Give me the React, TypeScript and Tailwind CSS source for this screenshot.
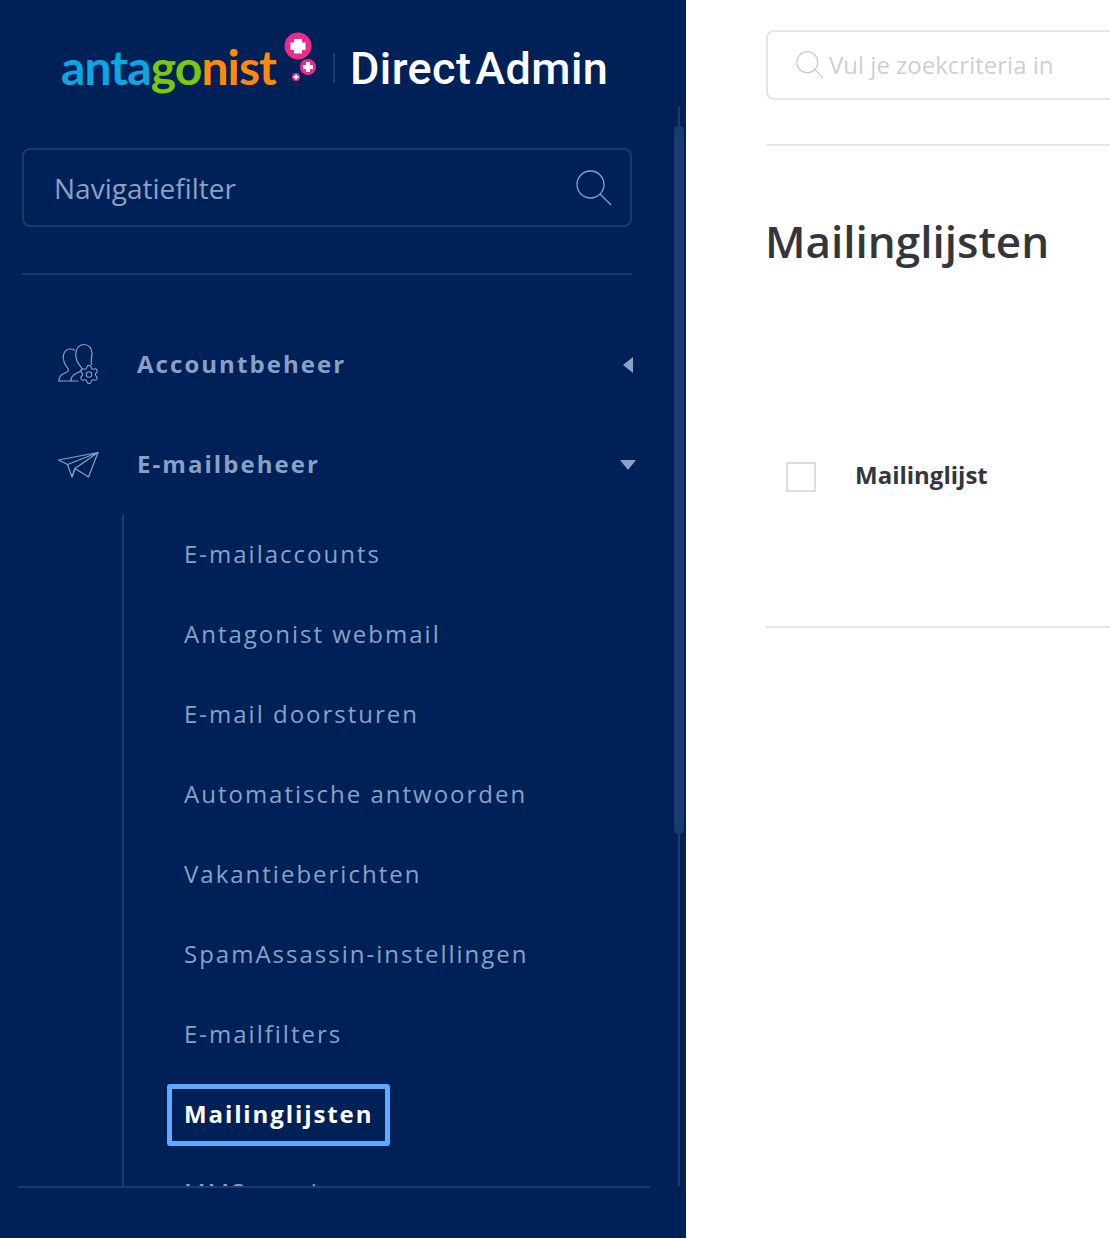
import { Settings } from 'lucide-react';

const subItems = [
  'E-mailaccounts',
  'Antagonist webmail',
  'E-mail doorsturen',
  'Automatische antwoorden',
  'Vakantieberichten',
  'SpamAssassin-instellingen',
  'E-mailfilters',
];

function SearchIcon({ className, stroke }: { className: string; stroke: string }) {
  return (
    <svg viewBox="0 0 36 36" fill="none" stroke={stroke} strokeWidth="1.3" className={className}>
      <circle cx="14.5" cy="14.5" r="13.5" />
      <path d="M24 24l11 11" />
    </svg>
  );
}

function Logo() {
  return (
    <div className="flex h-[106px] items-start pl-[60px]">
      <div className="mt-[32px] flex items-start">
        <div className="mt-[10px] flex h-[50px] w-[220px] items-center pl-[1px] font-['Lato',sans-serif] text-[48px] leading-none font-bold tracking-[-0.9px]">
          <span className="text-[#0ea5e0]">anta</span>
          <span className="text-[#7ac70c]">go</span>
          <span className="text-[#ff8a0d]">nist</span>
        </div>
        <svg viewBox="0 0 40 60" className="h-[60px] w-[40px]">
          <circle cx="18" cy="14" r="13.5" fill="#ec2b8c" />
          <path d="M14 7h8v3.500h3.500v7.500H22v3.500h-8V18h-3.500v-7.500H14z" fill="#fff" />
          <circle cx="28" cy="35" r="8" fill="#ec2b8c" />
          <path d="M26 30h4v3h3v4h-3v3h-4v-3h-3v-4h3z" fill="#fff" />
          <circle cx="16" cy="45" r="4" fill="#ec2b8c" />
          <path d="M15 42.500h2v1.500h1.500v2H17v1.500h-2V46h-1.500v-2H15z" fill="#fff" />
        </svg>
        <div className="mt-[21px] ml-[13px] h-[30px] w-[2px] bg-[#1b3a70]" />
        <div className="mt-[11px] ml-[15px] font-['Roboto',sans-serif] text-[45px] leading-[52px] font-medium tracking-[0.4px] whitespace-nowrap text-white">
          Direct<span className="ml-[4px]">Admin</span>
        </div>
      </div>
    </div>
  );
}

function UsersIcon() {
  return (
    <svg viewBox="56 343 44 44" fill="none" stroke="#8ba0c6" strokeWidth="1.200" strokeLinecap="round" className="h-[44px] w-[44px]">
      <path d="M59 382h19" />
      <path d="M59 382c0-3.500 1-5.500 4-7 2.500-1.300 5.500-2.200 5.500-4 0-1.500-2.800-4-4.200-7.500-1-2.500-1.500-5-.8-7.500.8-3.500 3.500-6 7-6 1.500 0 3 .4 4.300 1.200" />
      <path d="M71 382c0-3.500 1-5.300 4-7 3-1.700 7-2.700 7-5 0-1.500-3.500-4.500-5-8-1.200-2.800-1.800-6-1-9 1-4.500 4-7.500 8-7.500 4.500 0 8 3.500 8 8.500 0 3-.8 5.500-.8 8 0 1.500.2 2.500.5 3.500" />
      <Settings x="78" y="364.500" width="22" height="22" strokeWidth="1.200" stroke="#8ba0c6" />
    </svg>
  );
}

function PlaneIcon() {
  return (
    <svg viewBox="16 117 44 34" fill="none" stroke="#8ba0c6" strokeWidth="1.200" strokeLinejoin="round" className="h-[34px] w-[44px]">
      <path d="M18.500 130L58 122.500 48.500 147 35 138.500 32 147 27.500 134.500z" />
      <path d="M27.500 134.500L58 122.500 35 138.500M32 147l3-8.500" />
    </svg>
  );
}

export default function App() {
  return (
    <div className="flex h-[1238px] w-full overflow-hidden bg-white font-['Open_Sans',sans-serif]">
      <aside className="relative flex h-[1238px] w-[686px] shrink-0 flex-col bg-[#002157]">
        <Logo />

        {/* nav scroll area, cut off at the footer line */}
        <div className="relative h-[1080px] overflow-hidden">
          <div className="absolute top-0 right-[6px] bottom-0 w-[2px] bg-[#1b3a70]" />
          <div className="absolute top-[20px] right-[2px] h-[708px] w-[10px] rounded-[5px] bg-[#1b3a70]" />

          <div className="pt-[42px] pl-[22px]">
            <div className="flex h-[79px] w-[610px] items-center justify-between rounded-[8px] border-2 border-[#1b3a70] pr-[18px] pl-[30px]">
              <span className="text-[28px] text-[#8ba0c6]">Navigatiefilter</span>
              <SearchIcon className="h-[36px] w-[36px]" stroke="#8ba0c6" />
            </div>
            <div className="mt-[46px] h-[2px] w-[610px] bg-[#1b3a70]" />
          </div>

          <div className="mt-[39px]">
            <div className="flex h-[100px] items-center pl-[56px]">
              <UsersIcon />
              <span className="ml-[37px] text-[24px] font-bold tracking-[2.05px] text-[#8ba0c6]">Accountbeheer</span>
              <div className="mt-[2px] mr-[53px] ml-auto h-0 w-0 border-y-[8px] border-r-[10px] border-y-transparent border-r-[#8ba0c6]" />
            </div>
            <div className="flex h-[100px] items-center pl-[56px]">
              <PlaneIcon />
              <span className="ml-[37px] text-[24px] font-bold tracking-[2.05px] text-[#8ba0c6]">E-mailbeheer</span>
              <div className="mt-[2px] mr-[50px] ml-auto h-0 w-0 border-x-[8px] border-t-[10px] border-x-transparent border-t-[#8ba0c6]" />
            </div>

            <ul className="mt-[1px] ml-[122px] border-l-2 border-[#1b3a70] pb-[40px]">
              {subItems.map((item) => (
                <li key={item} className="flex h-[80px] items-center pl-[60px] text-[24px] tracking-[2px] text-[#8ba0c6] first:mt-[-1px]">
                  {item}
                </li>
              ))}
              <li className="flex h-[80px] items-center pl-[43px]">
                <span className="mt-[2px] flex h-[62px] w-[223px] items-center rounded-[3px] border-[5px] border-[#60a9ff] pb-[2px] pl-[12px] text-[24px] font-bold tracking-[1.9px] whitespace-nowrap text-white">
                  Mailinglijsten
                </span>
              </li>
              <li className="mt-[-2px] flex h-[80px] items-center pl-[60px] text-[24px] tracking-[2px] text-[#8ba0c6]">
                MMS-service
              </li>
            </ul>
          </div>
        </div>

        <div className="ml-[18px] h-[2px] w-[632px] bg-[#1b3a70]" />
      </aside>

      <main className="min-w-0 flex-1 pt-[30px] pl-[80px]">
        <div className="flex h-[70px] w-[600px] items-center rounded-[8px] border-2 border-[#e5e5e5] pl-[28px]">
          <SearchIcon className="h-[28px] w-[28px]" stroke="#c4c4c4" />
          <span className="ml-[5px] text-[24px] text-[#cfcfcf]">Vul je zoekcriteria in</span>
        </div>
        <div className="mt-[44px] h-[2px] w-[600px] bg-[#e5e5e5]" />
        <h1 className="mt-[65px] ml-[-1px] text-[44px] leading-[60px] font-semibold whitespace-nowrap text-[#33363b]">
          Mailinglijsten
        </h1>
        <div className="mt-[189px] flex items-center pl-[20px]">
          <div className="h-[30px] w-[30px] border-2 border-[#dedede]" />
          <span className="mt-[-3px] ml-[39px] text-[24px] font-bold text-[#33363b]">Mailinglijst</span>
        </div>
        <div className="mt-[133px] h-[2px] w-[600px] bg-[#e5e5e5]" />
      </main>
    </div>
  );
}
